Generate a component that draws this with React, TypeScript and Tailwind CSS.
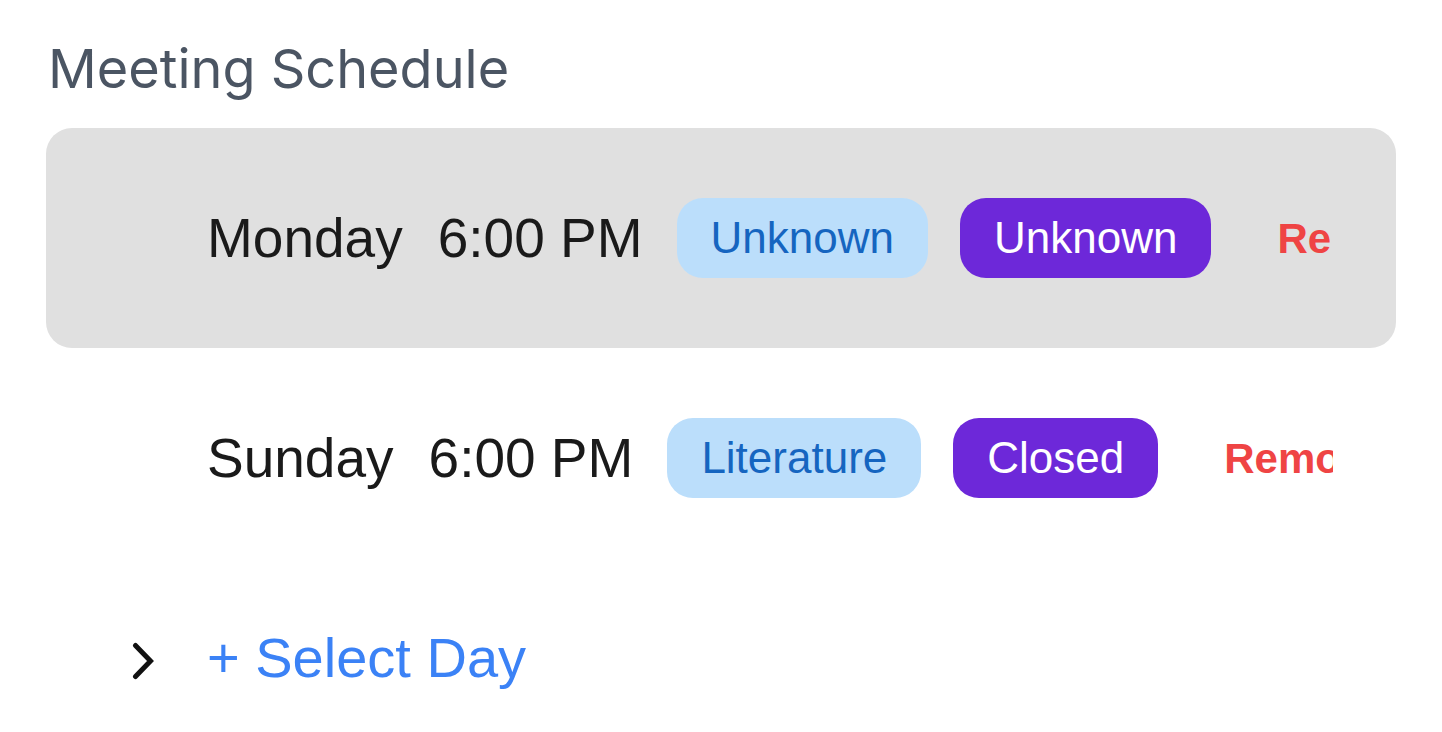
import React from "react";

const meetings = [
  { day: "Monday", time: "6:00 PM", type: "Unknown", access: "Unknown", active: true },
  { day: "Sunday", time: "6:00 PM", type: "Literature", access: "Closed", active: false },
];

export default function App() {
  return (
    <main className="min-h-screen w-[1442px] bg-white px-[46px] pt-[35px] font-['Liberation_Sans',Arial,sans-serif]">
      <h2 className="pl-[2px] font-['Inter',sans-serif] text-[54px] leading-[67px] text-[#4b5563]">
        Meeting Schedule
      </h2>

      <div className="mt-[26px] flex flex-col">
        {meetings.map((m) => (
          <div
            key={m.day}
            className={`flex h-[220px] items-center rounded-[26px] ${m.active ? "bg-[#e0e0e0]" : ""}`}
          >
            <div className="ml-[161px] flex w-[1126px] items-center overflow-hidden whitespace-nowrap">
              <span className="text-[55px] text-[#1a1a1a]">{m.day}</span>
              <span className="ml-[35px] text-[55px] text-[#1a1a1a]">{m.time}</span>
              <span className="ml-[34px] flex h-[80px] items-center rounded-[26px] bg-[#bbdefb] px-[34px] text-[44px] text-[#1565c0]">
                {m.type}
              </span>
              <span className="ml-[32px] flex h-[80px] items-center rounded-[26px] bg-[#6d28d9] px-[34px] text-[44px] text-white">
                {m.access}
              </span>
              <button className="ml-[66px] text-[42px] font-bold text-[#ef4444]">Remove</button>
            </div>
          </div>
        ))}
      </div>

      <div className="mt-[48px] flex items-center pl-[85px]">
        <svg width="24" height="38" viewBox="0 0 24 38" fill="none" className="mt-[6px] text-[#111]">
          <path d="M4.5 3.5 L19.5 19 L4.5 34.5" stroke="currentColor" strokeWidth="5" strokeLinecap="round" strokeLinejoin="miter" />
        </svg>
        <button className="ml-[52px] text-[56px] text-[#3b82f6]">+ Select Day</button>
      </div>
    </main>
  );
}
